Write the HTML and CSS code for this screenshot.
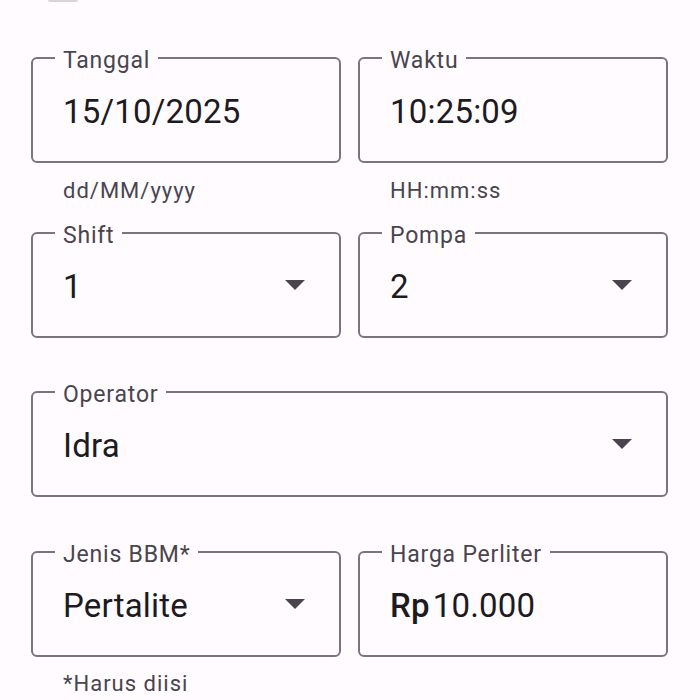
FILE: index.html
```html
<!DOCTYPE html>
<html lang="id">
<head>
<meta charset="utf-8">
<title>Form</title>
<link rel="stylesheet" href="styles.css">
</head>
<body>
<div class="page">
  <div class="topbar"></div>

  <div class="row row-first">
    <div class="field">
      <span class="label">Tanggal</span>
      <span class="value">15/10/2025</span>
    </div>
    <div class="field">
      <span class="label">Waktu</span>
      <span class="value">10:25:09</span>
    </div>
  </div>
  <div class="row helpers helpers-first">
    <span class="helper">dd/MM/yyyy</span>
    <span class="helper">HH:mm:ss</span>
  </div>

  <div class="row row-gap">
    <div class="field">
      <span class="label">Shift</span>
      <span class="value">1</span>
      <svg class="arrow" viewBox="0 0 20 10" width="20" height="10"><path d="M0 0H20L10 10Z"/></svg>
    </div>
    <div class="field">
      <span class="label">Pompa</span>
      <span class="value">2</span>
      <svg class="arrow" viewBox="0 0 20 10" width="20" height="10"><path d="M0 0H20L10 10Z"/></svg>
    </div>
  </div>

  <div class="row-single row-gap">
    <div class="field">
      <span class="label">Operator</span>
      <span class="value">Idra</span>
      <svg class="arrow" viewBox="0 0 20 10" width="20" height="10"><path d="M0 0H20L10 10Z"/></svg>
    </div>
  </div>

  <div class="row">
    <div class="field">
      <span class="label">Jenis BBM*</span>
      <span class="value">Pertalite</span>
      <svg class="arrow" viewBox="0 0 20 10" width="20" height="10"><path d="M0 0H20L10 10Z"/></svg>
    </div>
    <div class="field">
      <span class="label">Harga Perliter</span>
      <span class="value"><span class="prefix">Rp</span>10.000</span>
    </div>
  </div>
  <div class="row helpers helpers-last">
    <span class="helper">*Harus diisi</span>
  </div>
</div>
</body>
</html>
```

FILE: styles.css
```css
html, body {
  margin: 0;
  padding: 0;
  background: #fffbfe;
}

body {
  font-family: Roboto, "Liberation Sans", sans-serif;
  color: #1c1b1f;
  overflow: hidden;
}

.page {
  width: 700px;
  height: 700px;
  box-sizing: border-box;
  padding: 0 32px 0 31px;
}

.topbar {
  width: 30px;
  height: 2px;
  margin-left: 17px;
  background: #d8d4d8;
  border-radius: 0 0 2px 2px;
}

.row {
  display: grid;
  grid-template-columns: 310px 310px;
  column-gap: 17px;
}

.row-first {
  margin-top: 55px;
}

.row-gap {
  margin-bottom: 53px;
}

.row-single {
  display: block;
  margin-bottom: 54px;
}

.field {
  position: relative;
  height: 106px;
  box-sizing: border-box;
  border: 2px solid #79747e;
  border-radius: 6px;
  display: flex;
  align-items: center;
  padding: 3px 34px 0 30px;
}

.label {
  position: absolute;
  top: -12px;
  left: 22px;
  padding: 0 8px;
  background: #fffbfe;
  color: #49454f;
  font-size: 23px;
  line-height: 28px;
  letter-spacing: 0.8px;
  white-space: nowrap;
}

.value {
  font-size: 33px;
  line-height: 40px;
  letter-spacing: 0.2px;
  color: #1c1b1f;
  white-space: nowrap;
}

.prefix {
  font-weight: 500;
  margin-right: 3px;
}

.arrow {
  margin-left: auto;
  margin-top: -3px;
  fill: #49454f;
  display: block;
}

.helpers {
  height: 28px;
}

.helpers-first {
  margin-top: 14px;
  margin-bottom: 27px;
}

.helpers-last {
  margin-top: 13px;
}

.helper {
  padding-left: 32px;
  font-size: 22px;
  line-height: 28px;
  letter-spacing: 1px;
  color: #49454f;
  white-space: nowrap;
}
```
